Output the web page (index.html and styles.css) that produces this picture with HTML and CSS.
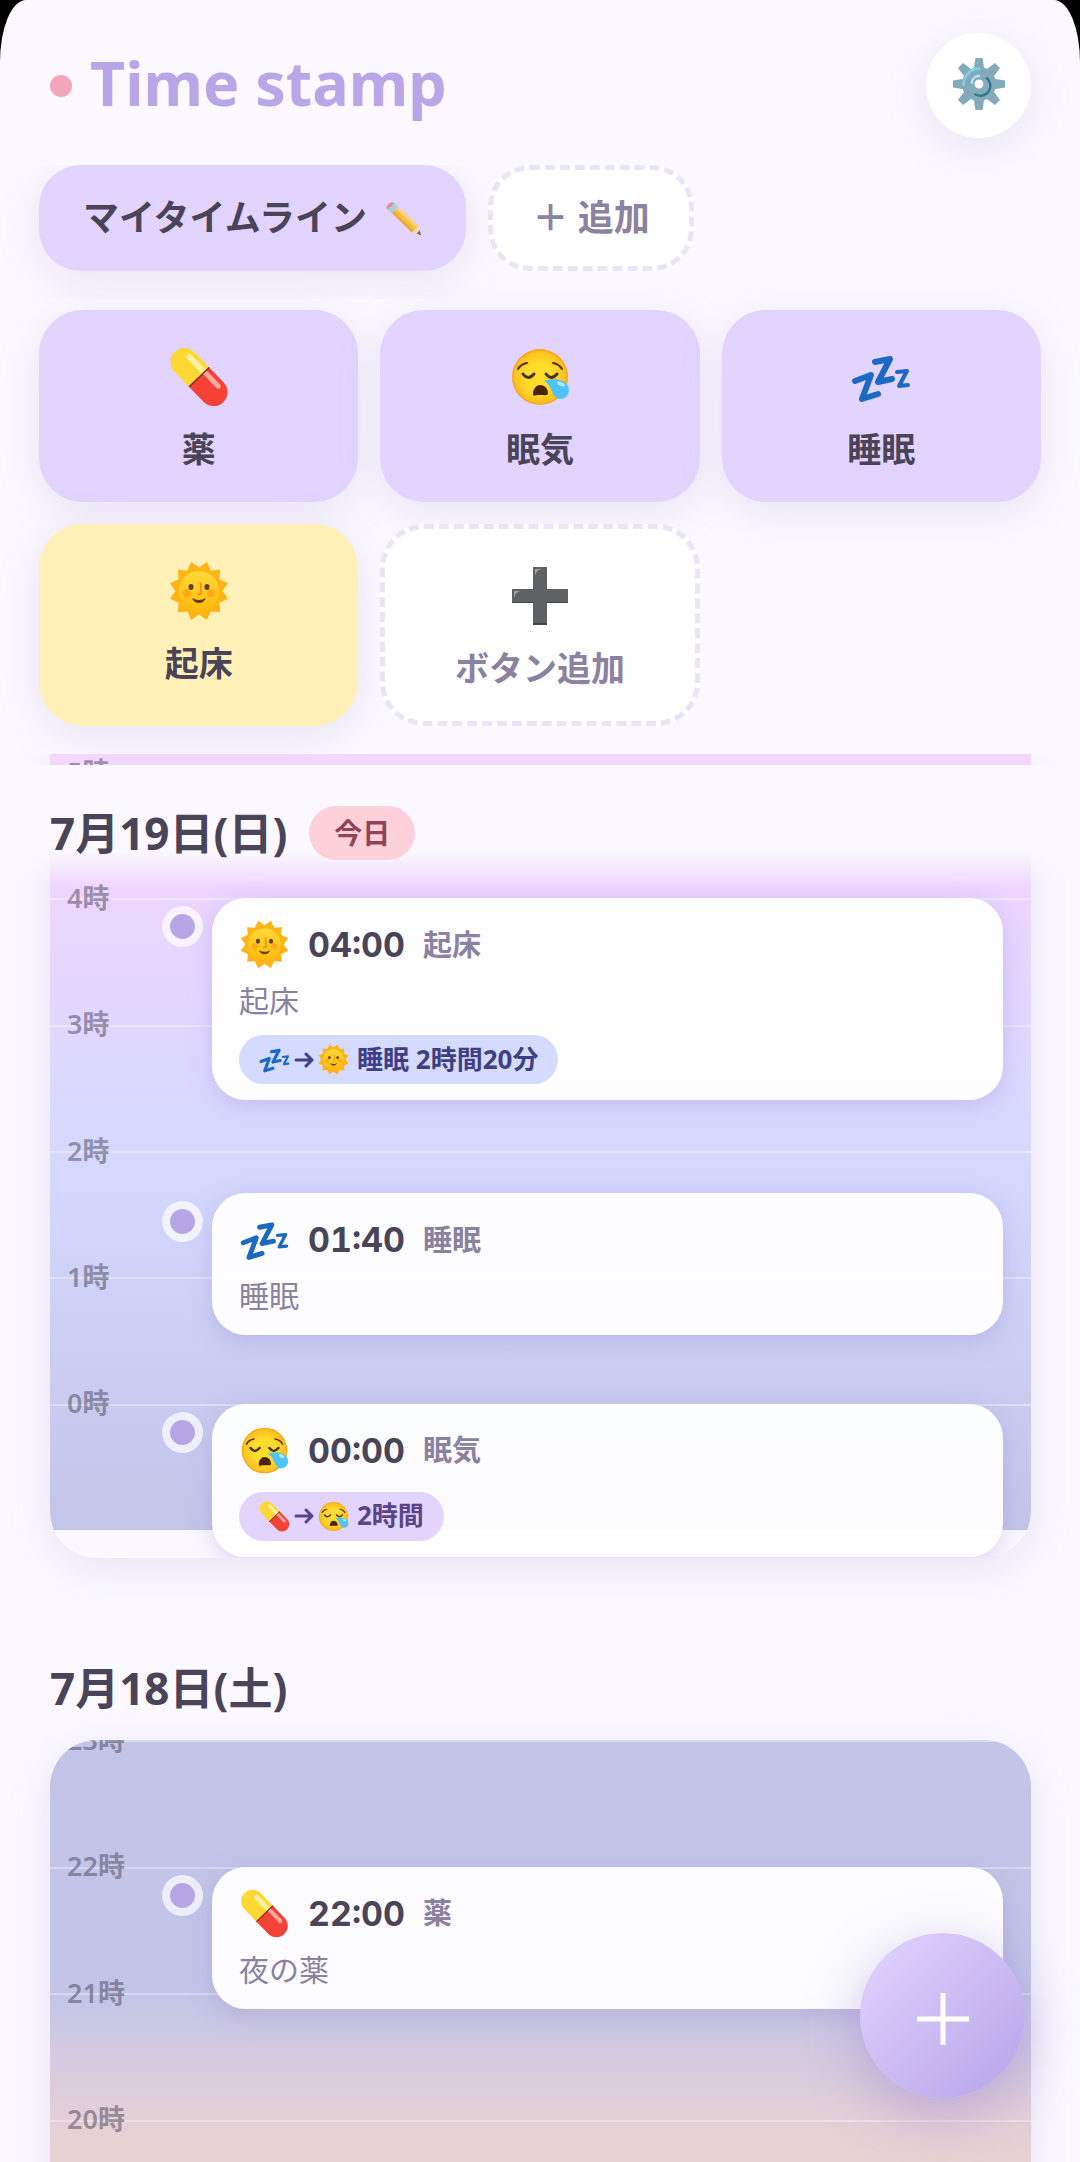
FILE: index.html
```html
<!DOCTYPE html>
<html lang="ja">
<head>
<meta charset="utf-8">
<meta name="viewport" content="width=device-width, initial-scale=1">
<title>Time stamp</title>
<link rel="stylesheet" href="styles.css">
</head>
<body>
<svg class="sprite" aria-hidden="true">
  <defs>
    <radialGradient id="face-fill" cx=".5" cy=".5" r=".5">
      <stop offset=".5" stop-color="#fddc2c"/><stop offset=".9" stop-color="#fbc220"/><stop offset="1" stop-color="#f2a01a"/>
    </radialGradient>
    <linearGradient id="sun-face" x1="0" y1="0" x2="0" y2="1">
      <stop offset="0" stop-color="#ffd93a"/><stop offset="1" stop-color="#ffb90a"/>
    </linearGradient>
    <symbol id="pill" viewBox="0 0 60 60">
      <g transform="rotate(46 30 30)">
        <path fill="#fdd835" d="M30 16H9a14 14 0 0 0 0 28h21z"/>
        <path fill="#f44336" d="M30 16h21a14 14 0 0 1 0 28H30z"/>
        <path fill="#8e2a1e" d="M29.500 16h1.500v28h-1.500z"/>
        <path fill="#fff0a0" d="M29 20H9a3 3 0 0 0 0 6h20z"/>
        <path fill="#ffa7a0" d="M31 20h19a2.500 2.500 0 0 1 0 5H31z"/>
      </g>
    </symbol>
    <symbol id="sleepy" viewBox="0 0 60 60">
      <circle cx="30" cy="30" r="28" fill="url(#face-fill)"/>
      <g fill="none" stroke="#4e3210" stroke-linecap="round">
        <path stroke-width="2" d="M8 22q3-5 9-6M52 22q-3-5-9-6"/>
        <path stroke-width="3" d="M13 27q5 7 11 0M36 27q5 7 11 0"/>
      </g>
      <path fill="#4a2503" d="M30 38c5 0 8 4 8 8 0 3-3 2-8 2s-7 2-7-1c0-5 3-9 7-9z"/>
      <path fill="#4fc3f7" d="M34 34c8-3 24-3 25 9 0 6-5 9-9 9-8 0-7-13-16-18z"/>
      <ellipse cx="51" cy="37" rx="4" ry="2" fill="#b3e8fd" transform="rotate(25 51 37)"/>
    </symbol>
    <symbol id="zzz" viewBox="0 0 60 60">
      <g fill="none" stroke="#1b69c2" stroke-linecap="round" stroke-linejoin="round">
        <path stroke-width="6" d="M4 34l16-6-9 24 16-5M24 15l15-3-12 23 14-3"/>
        <path stroke-width="4" d="M46 25l10-1-8 15 9-1"/>
      </g>
    </symbol>
    <symbol id="sun" viewBox="0 0 60 60">
      <path fill="#fdb515" d="M59 22.200L53.500 30 59 37.800 50.400 41.800 51.200 51.200 41.800 50.400 37.800 59 30 53.500 22.200 59 18.200 50.400 8.800 51.200 9.600 41.800 1 37.800 6.500 30 1 22.200 9.600 18.200 8.800 8.800 18.200 9.600 22.200 1 30 6.500 37.800 1 41.800 9.600 51.200 8.800 50.400 18.200z"/>
      <circle cx="30" cy="30" r="20" fill="url(#sun-face)"/>
      <circle cx="18" cy="32" r="4" fill="#ff9413" opacity=".6"/><circle cx="42" cy="32" r="4" fill="#ff9413" opacity=".6"/>
      <ellipse cx="22" cy="26" rx="2.500" ry="3" fill="#5d4015"/><ellipse cx="38" cy="26" rx="2.500" ry="3" fill="#5d4015"/>
      <path fill="none" stroke="#ee8b0c" stroke-width="1.600" stroke-linecap="round" d="M31 22c3 3-1 5 1 8 1 3-1 4-3 3"/>
      <path fill="#5d4015" d="M23 37q7 4 14 0-2 5-7 5t-7-5z"/>
    </symbol>
    <symbol id="heavy-plus" viewBox="0 0 60 60">
      <path fill="#5f6165" d="M23 1h14v22h21v14H37v22H23V37H2V23h21z"/>
      <path fill="#46484b" d="M2 36h21v1H2zM37 36h21v1H37zM23 57h14v2H23z"/>
      <path fill="#9fa1a5" d="M25 3h7q-6 1-7 7zM4 25h7q-6 1-7 7z"/>
    </symbol>
    <symbol id="gear" viewBox="0 0 60 60">
      <g fill="#82aabb">
        <g id="gear-teeth"><path id="tooth" d="M26 1h8l2 14H24zM24 45h12l-2 14h-8z"/><use href="#tooth" transform="rotate(90 30 30)"/></g>
        <use href="#gear-teeth" transform="rotate(45 30 30)"/>
        <path fill-rule="evenodd" d="M30 11a19 19 0 1 0 0 38 19 19 0 0 0 0-38zm0 14a5 5 0 1 1 0 10 5 5 0 0 1 0-10z"/>
      </g>
      <path fill="none" stroke="#80cfe5" stroke-width="3" stroke-linecap="round" d="M13 31a17 17 0 0 1 17-18"/>
      <path fill="none" stroke="#b7e3f0" stroke-width="2.500" stroke-linecap="round" d="M22 29a8 8 0 0 1 8-8"/>
      <path fill="none" stroke="#2f7489" stroke-width="2.500" d="M38 23a11 11 0 0 1-13 18"/>
    </symbol>
    <symbol id="pencil" viewBox="0 0 60 60">
      <path fill="#f9bf45" d="M19 11L55 44 43 54 9 21z"/>
      <path fill="#fdd576" d="M19 11L55 44l-4 3L16 14z"/>
      <path fill="#e9a935" d="M12 18L46 51l-3 3L9 21z"/>
      <path fill="#efdcc0" d="M55 44l4 15-16-5z"/>
      <path fill="#6f6669" d="M56 51l3 8-8-3z"/>
      <path fill="#a9cfdf" d="M14 6l7 6-12 11-6-7z"/>
      <path fill="#ea8a9c" d="M3 8q-5 4 0 8L14 6q-5-5-11 2z"/>
    </symbol>
  </defs>
</svg>

<div class="app">
  <header class="top">
    <div class="brand">
      <h1 class="title"><span class="title-dot"></span><span class="title-text">Time stamp</span></h1>
      <button class="settings" type="button" aria-label="設定"><svg class="icon-gear"><use href="#gear"/></svg></button>
    </div>
    <nav class="tabs">
      <button class="tab" type="button">マイタイムライン <svg class="icon-pencil"><use href="#pencil"/></svg></button>
      <button class="tab tab-add" type="button">＋ 追加</button>
    </nav>
    <div class="stamps">
      <button class="stamp" type="button"><span class="stamp-icon"><svg><use href="#pill"/></svg></span><span class="stamp-label">薬</span></button>
      <button class="stamp" type="button"><span class="stamp-icon"><svg><use href="#sleepy"/></svg></span><span class="stamp-label">眠気</span></button>
      <button class="stamp" type="button"><span class="stamp-icon"><svg><use href="#zzz"/></svg></span><span class="stamp-label">睡眠</span></button>
      <button class="stamp stamp-yellow" type="button"><span class="stamp-icon"><svg><use href="#sun"/></svg></span><span class="stamp-label">起床</span></button>
      <button class="stamp stamp-add" type="button"><span class="stamp-icon"><svg><use href="#heavy-plus"/></svg></span><span class="stamp-label">ボタン追加</span></button>
    </div>
  </header>

  <main class="timeline">
    <section class="day day-today">
      <h2 class="date date-pinned">7月19日(日) <span class="today">今日</span></h2>
      <div class="board">
        <div class="hours hours-morning">
          <div class="hour"><span class="hour-label">5時</span></div>
          <div class="hour"><span class="hour-label">4時</span></div>
          <div class="hour"><span class="hour-label">3時</span></div>
          <div class="hour"><span class="hour-label">2時</span></div>
          <div class="hour"><span class="hour-label">1時</span></div>
          <div class="hour"><span class="hour-label">0時</span></div>
          <article class="entry" style="grid-row: 2">
            <div class="entry-head"><svg class="entry-icon"><use href="#sun"/></svg><time class="entry-time">04:00</time><span class="entry-name">起床</span></div>
            <p class="note">起床</p>
            <p class="span span-blue"><svg><use href="#zzz"/></svg><svg class="arrow" viewBox="0 0 20 20"><path d="M2 10h16M12 4l6 6-6 6"/></svg><svg><use href="#sun"/></svg><span class="span-text">睡眠 2時間20分</span></p>
          </article>
          <article class="entry" style="grid-row: 4; margin-top: 42px">
            <div class="entry-head"><svg class="entry-icon"><use href="#zzz"/></svg><time class="entry-time">01:40</time><span class="entry-name">睡眠</span></div>
            <p class="note">睡眠</p>
          </article>
          <article class="entry" style="grid-row: 6">
            <div class="entry-head"><svg class="entry-icon"><use href="#sleepy"/></svg><time class="entry-time">00:00</time><span class="entry-name">眠気</span></div>
            <p class="span span-purple"><svg><use href="#pill"/></svg><svg class="arrow" viewBox="0 0 20 20"><path d="M2 10h16M12 4l6 6-6 6"/></svg><svg><use href="#sleepy"/></svg><span class="span-text">2時間</span></p>
          </article>
        </div>
      </div>
    </section>

    <section class="day">
      <h2 class="date">7月18日(土)</h2>
      <div class="board">
        <div class="hours hours-night">
          <div class="hour"><span class="hour-label">23時</span></div>
          <div class="hour"><span class="hour-label">22時</span></div>
          <div class="hour"><span class="hour-label">21時</span></div>
          <div class="hour"><span class="hour-label">20時</span></div>
          <article class="entry" style="grid-row: 2">
            <div class="entry-head"><svg class="entry-icon"><use href="#pill"/></svg><time class="entry-time">22:00</time><span class="entry-name">薬</span></div>
            <p class="note">夜の薬</p>
          </article>
        </div>
      </div>
    </section>
  </main>
</div>

<button class="fab" type="button" aria-label="記録を追加"><svg viewBox="0 0 52 52"><path d="M26 0v52M0 26h52"/></svg></button>
</body>
</html>
```
FILE: styles.css
```css
:root {
  --paper: #fbf9ff;
  --lavender: #e2d4ff;
  --violet: #b8a6e6;
  --ink: #4a4458;
  --muted: #8a82a0;
  --dash: #e9e5f7;
  --shadow: 0 10px 44px rgba(150, 130, 200, .18);
}

* { box-sizing: border-box; }

body {
  margin: 0;
  height: 100vh;
  overflow: hidden;
  background: #000;
  color: var(--ink);
  font-family: "Noto Sans", "Noto Sans CJK JP", sans-serif;
}

button { font: inherit; color: inherit; border: 0; cursor: pointer; }
h1, h2, p { margin: 0; }
svg { display: block; flex: none; }
.sprite { position: absolute; width: 0; height: 0; }

.app {
  display: flex;
  flex-direction: column;
  height: 100vh;
  overflow: hidden;
  background: var(--paper);
  border-radius: 26px 26px 0 0 / 62px 62px 0 0;
}

/* Header */
.top { padding-top: 33px; flex: none; }

.brand {
  display: flex;
  align-items: center;
  justify-content: space-between;
  padding: 0 49px 27px 50px;
}

.title {
  display: flex;
  align-items: center;
  gap: 18px;
  color: var(--violet);
  font-size: 61px;
  line-height: 80px;
  font-weight: 700;
}

.title-text { padding-bottom: 6px; }
.title-dot { width: 22px; height: 22px; border-radius: 50%; background: #f3a6b9; }

.settings {
  display: grid;
  place-items: center;
  width: 105px;
  height: 105px;
  padding: 0 0 4px;
  border-radius: 50%;
  background: #fff;
  box-shadow: var(--shadow);
}

.icon-gear { width: 54px; height: 54px; }

.tabs {
  display: flex;
  gap: 22px;
  padding: 0 39px 28px;
  overflow: hidden;
}

.tab {
  display: flex;
  align-items: center;
  gap: 10px;
  height: 106px;
  padding: 0 44px 6px;
  border-radius: 42px;
  background: var(--lavender);
  box-shadow: var(--shadow);
  font-size: 36px;
  font-weight: 700;
  white-space: pre;
}

.tab-add, .stamp-add {
  border: 5px dashed var(--dash);
  background: #fff;
  box-shadow: none;
  color: var(--muted);
}

.tab-add { padding: 0 39px 6px; }
.icon-pencil { width: 36px; height: 36px; margin-top: 6px; }

.stamps {
  display: grid;
  grid-template-columns: repeat(3, 1fr);
  gap: 22px;
  padding: 11px 39px 28px;
}

.stamp {
  display: flex;
  flex-direction: column;
  align-items: center;
  justify-content: flex-start;
  gap: 8px;
  padding: 28px 10px;
  border-radius: 44px;
  background: var(--lavender);
  box-shadow: var(--shadow);
  font-size: 34px;
  line-height: 50px;
  font-weight: 700;
}

.stamp-yellow { background: #fff0b8; }
.stamp-add { box-shadow: none; background: #fff; }

.stamp-icon { display: grid; place-items: center; height: 78px; }
.stamp-icon svg { width: 60px; height: 60px; }

/* Timeline */
.timeline { flex: 1; min-height: 0; overflow: hidden; }

.day { padding: 0 49px 0 50px; }
.day-today { position: relative; }

.date {
  display: flex;
  align-items: center;
  gap: 22px;
  padding: 96px 0 18px;
  font-size: 44px;
  line-height: 68px;
  font-weight: 700;
}

.date-pinned {
  position: absolute;
  z-index: 2;
  top: 11px;
  left: 0;
  right: 0;
  padding: 34px 50px 20px;
  background: linear-gradient(var(--paper) 70%, rgba(251, 249, 255, 0));
}

.today {
  padding: 0 25px;
  border-radius: 27px;
  background: #fdd0da;
  color: #8f4458;
  font-size: 28px;
  line-height: 54px;
}

.board {
  overflow: hidden;
  border-radius: 47px;
  background: var(--paper);
}

.day .board { box-shadow: var(--shadow); }

.day-today .board {
  padding-bottom: 28px;
  border-radius: 0 0 47px 47px;
}

.hours { display: grid; }

.hours-morning {
  grid-template-rows: repeat(6, minmax(0, 1fr));
  height: 776px;
  padding-top: 18px;
  background: linear-gradient(#f4d6ff, #ecd6ff 18%, #d5d9ff 52%, #c2c5e8);
}

.hours-night {
  grid-template-rows: repeat(4, minmax(0, 1fr));
  height: 506px;
  background: linear-gradient(#c2c5e8 50%, #e4d0d7 75%, #f1d4c8);
}

.hour {
  grid-column: 1;
  align-self: start;
  display: flex;
  align-items: center;
  height: 0;
  padding-left: 17px;
  border-top: 2px solid rgba(255, 255, 255, .35);
  color: rgba(74, 68, 88, .52);
  font-size: 27px;
  font-weight: 600;
}

.hour-label { padding-bottom: 8px; }

.hour:nth-child(1) { grid-row: 1; }
.hour:nth-child(2) { grid-row: 2; }
.hour:nth-child(3) { grid-row: 3; }
.hour:nth-child(4) { grid-row: 4; }
.hour:nth-child(5) { grid-row: 5; }
.hour:nth-child(6) { grid-row: 6; }

.entry {
  position: relative;
  grid-column: 1;
  align-self: start;
  margin: 0 28px 0 162px;
  padding: 16px 27px;
  border-radius: 34px;
  background: rgba(255, 255, 255, .95);
  box-shadow: 0 6px 24px rgba(130, 110, 190, .25);
}

/* Marker on the time axis */
.entry::before {
  content: "";
  position: absolute;
  top: 16px;
  left: -42px;
  width: 25px;
  height: 25px;
  border-radius: 50%;
  background: #b7a6e6;
  box-shadow: 0 0 0 8px rgba(255, 255, 255, .7);
}

.entry-head { display: flex; align-items: center; height: 61px; }
.entry-icon { width: 49px; height: 49px; margin: 0 19px 0 1px; }
.entry-time { margin-right: 18px; font-family: Inter, "Noto Sans", sans-serif; font-size: 34px; font-weight: 700; font-variant-numeric: tabular-nums; }
.entry-name { padding-bottom: 4px; color: var(--muted); font-size: 29px; font-weight: 700; }

.note {
  padding-top: 3px;
  color: var(--muted);
  font-size: 30px;
  line-height: 46px;
}

.span {
  display: flex;
  align-items: center;
  gap: 4px;
  width: fit-content;
  height: 49px;
  margin-top: 11px;
  padding: 0 20px;
  border-radius: 25px;
  font-size: 26px;
  font-weight: 700;
}

.span svg { width: 31px; height: 31px; }
.span .arrow { width: 20px; height: 20px; margin: 0; fill: none; stroke: currentColor; stroke-width: 3; stroke-linecap: round; stroke-linejoin: round; }
.span-text { padding: 0 0 4px 4px; }
.span-blue { background: #d5daff; color: #3f3f85; }
.span-purple { background: #e2d4fc; color: #5a4488; }

.fab {
  position: fixed;
  right: 55px;
  bottom: 64px;
  display: grid;
  place-items: center;
  width: 165px;
  height: 165px;
  padding: 6px 0 0;
  border-radius: 50%;
  background: linear-gradient(135deg, #e2d4ff, #b6a4e8);
  box-shadow: 0 16px 56px rgba(140, 115, 205, .42);
}

.fab svg { width: 52px; height: 52px; fill: none; stroke: #fff; stroke-width: 5; }
```
